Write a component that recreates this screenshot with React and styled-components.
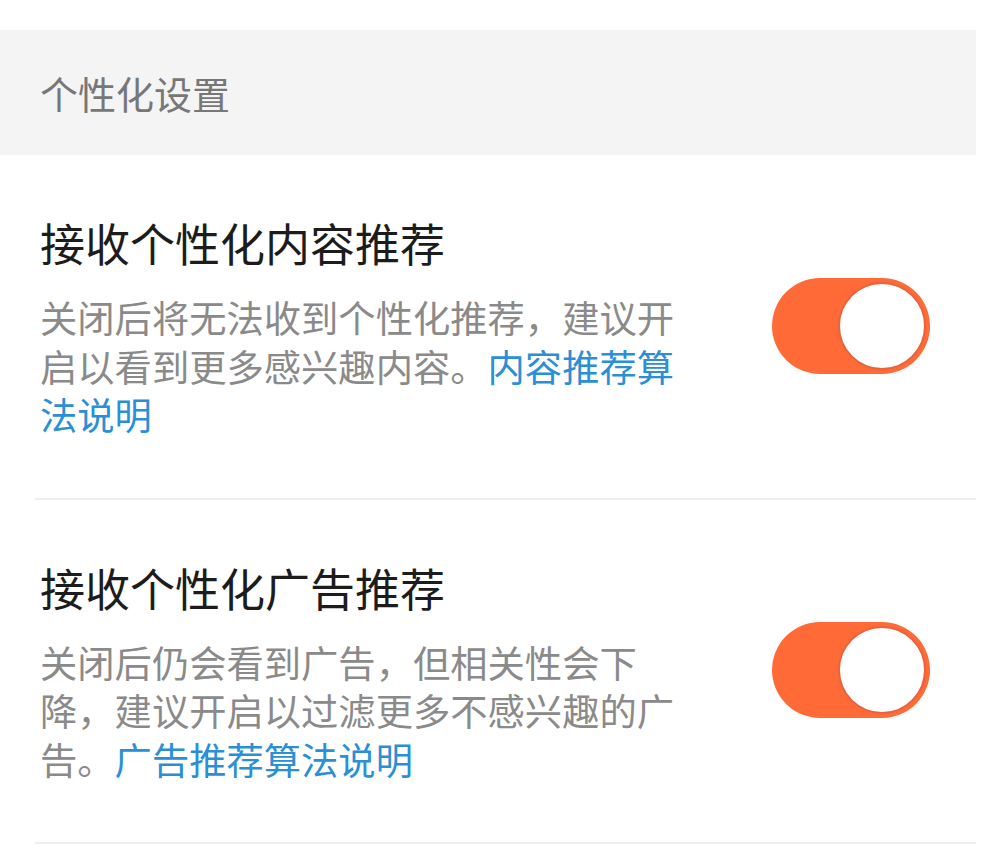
import React, { useState } from "react";
import styled, { createGlobalStyle } from "styled-components";

const GlobalStyle = createGlobalStyle`
  body {
    margin: 0;
    background: #fff;
    font-family: "Noto Sans CJK SC", "Noto Sans", sans-serif;
  }
`;

const Page = styled.div`
  width: 976px;
  padding-top: 30px;
`;

const SectionHeader = styled.div`
  height: 125px;
  background: #f4f4f4;
  display: flex;
  align-items: center;
  padding-left: 40px;
  font-size: 38px;
  color: #777;
`;

const Row = styled.div`
  display: flex;
  align-items: center;
  justify-content: space-between;
  margin-left: 35px;
  padding: 58px 46px 59px 5px;
  border-bottom: 2px solid #eeeeee;
`;

const TextCol = styled.div`
  width: 640px;
`;

const Title = styled.div`
  font-size: 45px;
  line-height: 60px;
  color: #1c1c1c;
  margin-bottom: 20px;
`;

const Desc = styled.div`
  font-size: 37.3px;
  line-height: 48.5px;
  color: #8a8a8a;
`;

const Link = styled.a`
  color: #2b8fd6;
  text-decoration: none;
`;

const Track = styled.button`
  position: relative;
  width: 158px;
  height: 96px;
  border-radius: 48px;
  border: none;
  padding: 0;
  cursor: pointer;
  background: ${(p) => (p.$on ? "#ff6a36" : "#e2e2e2")};
  flex-shrink: 0;
`;

const Knob = styled.span`
  position: absolute;
  top: 4px;
  left: ${(p) => (p.$on ? "66px" : "4px")};
  width: 88px;
  height: 88px;
  box-sizing: border-box;
  border-radius: 50%;
  background: #fff;
  border: 2px solid ${(p) => (p.$on ? "#e8623a" : "#d0d0d0")};
`;

function Toggle({ on, onToggle }) {
  return (
    <Track $on={on} onClick={onToggle}>
      <Knob $on={on} />
    </Track>
  );
}

function SettingRow({ title, desc, link }) {
  const [on, setOn] = useState(true);
  return (
    <Row>
      <TextCol>
        <Title>{title}</Title>
        <Desc>
          {desc}
          <Link href="#">{link}</Link>
        </Desc>
      </TextCol>
      <Toggle on={on} onToggle={() => setOn(!on)} />
    </Row>
  );
}

export default function App() {
  return (
    <Page>
      <GlobalStyle />
      <SectionHeader>个性化设置</SectionHeader>
      <SettingRow
        title="接收个性化内容推荐"
        desc="关闭后将无法收到个性化推荐，建议开启以看到更多感兴趣内容。"
        link="内容推荐算法说明"
      />
      <SettingRow
        title="接收个性化广告推荐"
        desc="关闭后仍会看到广告，但相关性会下降，建议开启以过滤更多不感兴趣的广告。"
        link="广告推荐算法说明"
      />
    </Page>
  );
}
